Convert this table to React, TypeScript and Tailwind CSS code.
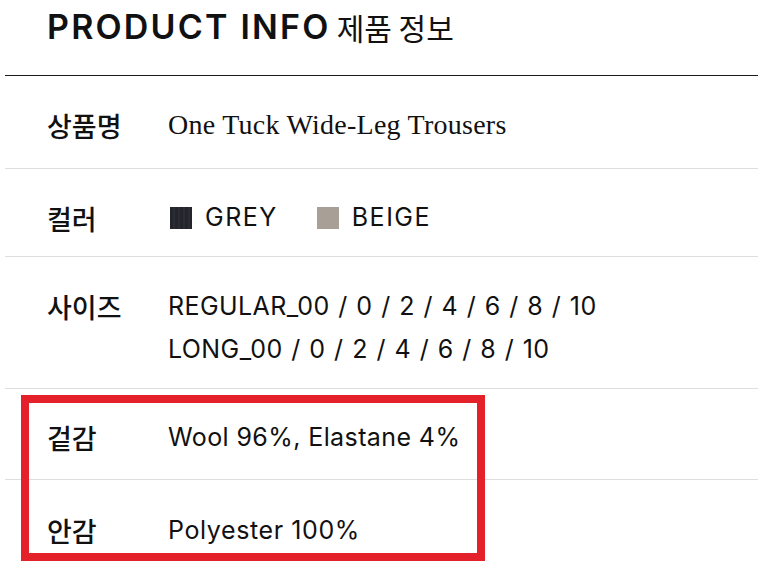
const sans = "font-['Inter','Noto_Sans_CJK_KR',sans-serif]";
const kr = "font-['Noto_Sans_CJK_KR',sans-serif]";

function Row({ label, height, pad, top, last, children }: { label: string; height: string; pad: string; top?: boolean; last?: boolean; children: React.ReactNode }) {
  return (
    <div className={`flex pl-[42px] ${top ? "items-start" : "items-center"} ${pad} ${height} ${last ? "" : "border-b border-[#dedede]"}`}>
      <div className={`${kr} w-[121px] shrink-0 text-[27px] font-medium leading-[43px] text-[#111]`}>{label}</div>
      <div className="min-w-0">{children}</div>
    </div>
  );
}

export default function App() {
  return (
    <div className="relative h-[568px] w-[758px] overflow-hidden bg-white text-[#111]">
      <div className="flex h-[75px] items-start pl-[47px] pt-[7px]">
        <h1 className={`${sans} text-[34px] font-semibold leading-[40px] tracking-[2.2px]`}>PRODUCT INFO</h1>
        <span className={`${kr} ml-[6px] text-[30px] font-normal leading-[40px]`}>제품 정보</span>
      </div>

      <div className="ml-[5px] border-t border-[#1a1a1a]">
        <Row label="상품명" height="h-[93px]" pad="pt-[6px]">
          <span className="font-['Liberation_Serif',serif] text-[28px] tracking-[0.25px]">One Tuck Wide-Leg Trousers</span>
        </Row>
        <Row label="컬러" height="h-[88px]" pad="pt-[11px]">
          <div className={`${sans} flex items-center text-[25px] tracking-[1.5px]`}>
            <span className="ml-[2px] mr-[13px] h-[22px] w-[22px] bg-[repeating-linear-gradient(90deg,#24242c_0px,#24242c_3px,#34343c_4px,#24242c_5px)]" />
            <span>GREY</span>
            <span className="ml-[39px] mr-[13px] h-[22px] w-[22px] bg-[#a89f96]" />
            <span>BEIGE</span>
          </div>
        </Row>
        <Row label="사이즈" height="h-[132px]" pad="pt-[28px]" top>
          <div className={`${sans} text-[25px] leading-[43px] tracking-[0.4px] [word-spacing:1.2px]`}>
            <div>REGULAR_00 / 0 / 2 / 4 / 6 / 8 / 10</div>
            <div>LONG_00 / 0 / 2 / 4 / 6 / 8 / 10</div>
          </div>
        </Row>
        <Row label="겉감" height="h-[91px]" pad="pt-[7px]">
          <span className={`${sans} text-[25px] tracking-[0.4px]`}>Wool 96%, Elastane 4%</span>
        </Row>
        <Row label="안감" height="h-[98px]" pad="pt-[3px]" last>
          <span className={`${sans} text-[25px] tracking-[0.6px]`}>Polyester 100%</span>
        </Row>
      </div>

      <div className="pointer-events-none absolute left-[21px] top-[395px] h-[166px] w-[464px] border-[8px] border-[#e4202b]" />
    </div>
  );
}
